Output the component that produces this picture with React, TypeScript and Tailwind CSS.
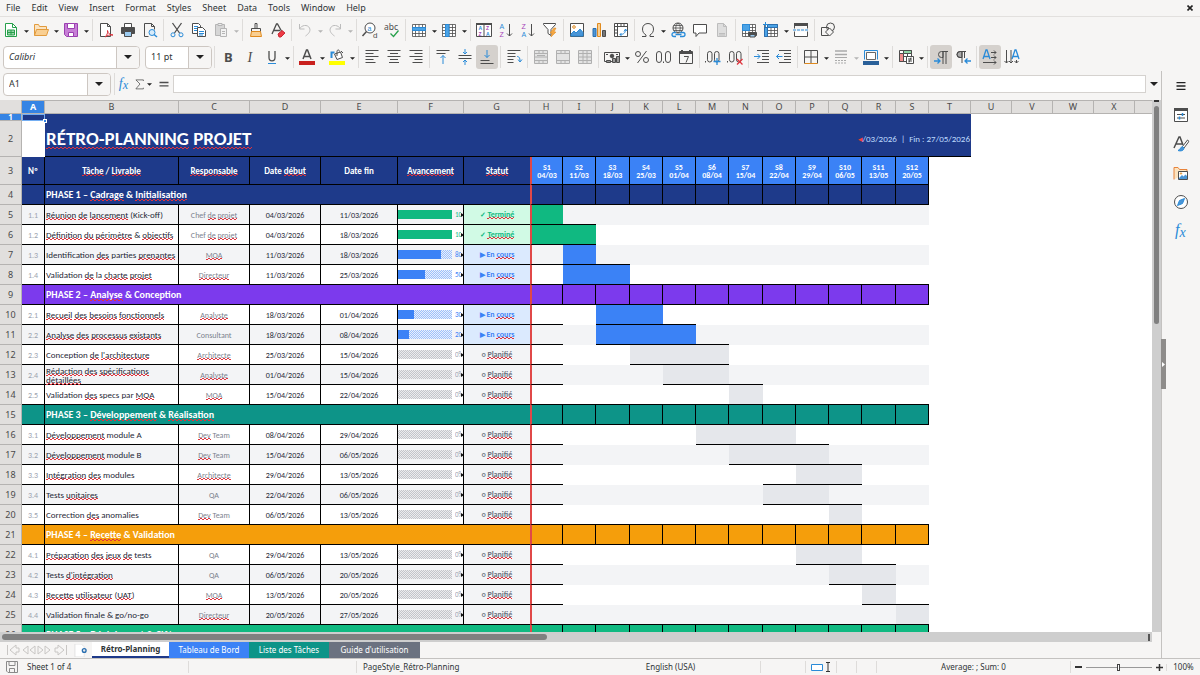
import { Fragment, type ReactNode } from "react";
import clsx from "clsx";

type Status = "done" | "active" | "planned";

type Task = {
  kind: "task";
  id: string;
  title: string;
  owner: string;
  start: string;
  end: string;
  progress: number;
  status: Status;
  // first week (0 = S1) and number of weeks in the gantt
  week: number;
  span: number;
};

type Phase = { kind: "phase"; title: string; color: string };

// Words between asterisks are unknown to the spell checker
const rows: (Task | Phase)[] = [
  { kind: "phase", title: "PHASE 1 – *Cadrage* & *Initialisation*", color: "bg-[#1e3a8a]" },
  { kind: "task", id: "1.1", title: "*Réunion* *de* *lancement* (Kick-off)", owner: "Chef *de* *projet*", start: "04/03/2026", end: "11/03/2026", progress: 100, status: "done", week: 0, span: 1 },
  { kind: "task", id: "1.2", title: "*Définition* *du* *périmètre* & *objectifs*", owner: "Chef *de* *projet*", start: "04/03/2026", end: "18/03/2026", progress: 100, status: "done", week: 0, span: 2 },
  { kind: "task", id: "1.3", title: "Identification *des* parties *prenantes*", owner: "*MOA*", start: "11/03/2026", end: "18/03/2026", progress: 80, status: "active", week: 1, span: 1 },
  { kind: "task", id: "1.4", title: "Validation *de* la *charte* *projet*", owner: "*Directeur*", start: "11/03/2026", end: "25/03/2026", progress: 50, status: "active", week: 1, span: 2 },
  { kind: "phase", title: "PHASE 2 – *Analyse* & Conception", color: "bg-[#7c3aed]" },
  { kind: "task", id: "2.1", title: "*Recueil* *des* *besoins* *fonctionnels*", owner: "*Analyste*", start: "18/03/2026", end: "01/04/2026", progress: 30, status: "active", week: 2, span: 2 },
  { kind: "task", id: "2.2", title: "*Analyse* *des* *processus* *existants*", owner: "Consultant", start: "18/03/2026", end: "08/04/2026", progress: 20, status: "active", week: 2, span: 3 },
  { kind: "task", id: "2.3", title: "Conception *de* *l'architecture*", owner: "*Architecte*", start: "25/03/2026", end: "15/04/2026", progress: 0, status: "planned", week: 3, span: 3 },
  { kind: "task", id: "2.4", title: "*Rédaction* *des* *spécifications* *détaillées*", owner: "*Analyste*", start: "01/04/2026", end: "15/04/2026", progress: 0, status: "planned", week: 4, span: 2 },
  { kind: "task", id: "2.5", title: "Validation *des* specs par *MOA*", owner: "*MOA*", start: "15/04/2026", end: "22/04/2026", progress: 0, status: "planned", week: 6, span: 1 },
  { kind: "phase", title: "PHASE 3 – *Développement* & *Réalisation*", color: "bg-[#0d9488]" },
  { kind: "task", id: "3.1", title: "*Développement* module A", owner: "*Dev* Team", start: "08/04/2026", end: "29/04/2026", progress: 0, status: "planned", week: 5, span: 3 },
  { kind: "task", id: "3.2", title: "*Développement* module B", owner: "*Dev* Team", start: "15/04/2026", end: "06/05/2026", progress: 0, status: "planned", week: 6, span: 3 },
  { kind: "task", id: "3.3", title: "*Intégration* *des* modules", owner: "*Architecte*", start: "29/04/2026", end: "13/05/2026", progress: 0, status: "planned", week: 8, span: 2 },
  { kind: "task", id: "3.4", title: "Tests *unitaires*", owner: "QA", start: "22/04/2026", end: "06/05/2026", progress: 0, status: "planned", week: 7, span: 2 },
  { kind: "task", id: "3.5", title: "Correction *des* anomalies", owner: "*Dev* Team", start: "06/05/2026", end: "13/05/2026", progress: 0, status: "planned", week: 9, span: 1 },
  { kind: "phase", title: "PHASE 4 – *Recette* & Validation", color: "bg-[#f59e0b]" },
  { kind: "task", id: "4.1", title: "*Préparation* *des* *jeux* *de* tests", owner: "QA", start: "29/04/2026", end: "13/05/2026", progress: 0, status: "planned", week: 8, span: 2 },
  { kind: "task", id: "4.2", title: "Tests *d'intégration*", owner: "QA", start: "06/05/2026", end: "20/05/2026", progress: 0, status: "planned", week: 9, span: 2 },
  { kind: "task", id: "4.3", title: "*Recette* *utilisateur* (*UAT*)", owner: "*MOA*", start: "13/05/2026", end: "20/05/2026", progress: 0, status: "planned", week: 10, span: 1 },
  { kind: "task", id: "4.4", title: "Validation finale & go/no-go", owner: "*Directeur*", start: "20/05/2026", end: "27/05/2026", progress: 0, status: "planned", week: 11, span: 1 },
  { kind: "phase", title: "PHASE 5 – *Déploiement* & *Clôture*", color: "bg-[#10b981]" },
];

const weeks = ["04/03", "11/03", "18/03", "25/03", "01/04", "08/04", "15/04", "22/04", "29/04", "06/05", "13/05", "20/05"];
const headings = ["Nº", "*Tâche* / *Livrable*", "*Responsable*", "Date *début*", "Date fin", "*Avancement*", "*Statut*"];
const letters = "ABCDEFGHIJKLMNOPQRSTUVWX".split("");
const columnWidths = [
  "w-[22px]", "w-[23px]", "w-[134px]", "w-[71px]", "w-[71px]", "w-[77px]", "w-[66px]", "w-[66px]",
  "w-[33px]", "w-[33px]", "w-[34px]", "w-[33px]", "w-[33px]", "w-[33px]", "w-[34px]", "w-[33px]", "w-[33px]", "w-[33px]", "w-[34px]", "w-[33px]",
  "w-[42px]", "w-[41px]", "w-[41px]", "w-[41px]", "w-[41px]",
];

const statusStyles: Record<Status, { label: string; mark: string; cell: string; fill: string; text: string; dots: string }> = {
  done: { label: "*Terminé*", mark: "✓", cell: "bg-[#d1fae5] text-[#10b981] font-bold", fill: "bg-[#10b981]", text: "text-[#10b981]", dots: "" },
  active: { label: "En *cours*", mark: "▶", cell: "bg-[#dbeafe] text-[#3b82f6] font-bold", fill: "bg-[#3b82f6]", text: "text-[#3b82f6]", dots: "bg-[conic-gradient(#9dc0fa_25%,#e8f0fd_0_50%,#9dc0fa_0_75%,#e8f0fd_0)]" },
  planned: { label: "*Planifié*", mark: "○", cell: "bg-[#f3f4f6] text-[#6b7280] font-bold", fill: "bg-[#e5e7eb]", text: "text-[#9ca3af]", dots: "bg-[conic-gradient(#c3c5ca_25%,#ececee_0_50%,#c3c5ca_0_75%,#ececee_0)]" },
};

function Checked({ text, large }: { text: string; large?: boolean }) {
  return (
    <>
      {text.split("*").map((part, i) =>
        i % 2 ? (
          <span
            key={i}
            className={clsx(
              "bg-[linear-gradient(90deg,#e0333c_50%,transparent_0),linear-gradient(90deg,transparent_50%,#e0333c_0)] bg-size-[4px_1px] bg-repeat-x",
              large ? "bg-position-[0_calc(100%-1px),0_calc(100%-2px)]" : "bg-position-[0_100%,0_calc(100%-1px)]",
            )}
          >
            {part}
          </span>
        ) : (
          <Fragment key={i}>{part}</Fragment>
        ),
      )}
    </>
  );
}

function RowHead({ n, height }: { n: number; height: string }) {
  return (
    <th scope="row" className={clsx("border-r border-b border-[#b5b3b1] p-0 text-center align-middle font-[Noto_Sans,sans-serif] text-[9px] leading-3", height, n === 1 ? "bg-[#3584e4] font-bold text-white" : "bg-[#e1dfdd] font-normal text-[#4a4a4a]")}>
      {n === 1 ? <span className="block h-[6px] text-[8px] leading-[6px]">1</span> : n}
    </th>
  );
}

function PhaseRow({ phase, n }: { phase: Phase; n: number }) {
  return (
    <tr>
      <RowHead n={n} height="h-[20px]" />
      <td className={clsx("border-r border-b border-black", phase.color)} />
      <td colSpan={6} className={clsx("border-b border-black px-px py-0 text-[10px] leading-3 font-bold whitespace-nowrap text-white", phase.color)}>
        <Checked text={phase.title} />
      </td>
      {weeks.map((w, i) => (
        <td key={w} className={clsx("border-r border-b border-black", phase.color, i === 0 && "border-l-2 border-l-[#e04848]")} />
      ))}
    </tr>
  );
}

function TaskRow({ task, n }: { task: Task; n: number }) {
  const stripe = n % 2 ? "bg-[#f3f4f6]" : "bg-white";
  const s = statusStyles[task.status];
  const next = rows[n - 3];
  const cell = "border-r border-b border-black p-0 text-center";
  const inBar = (t: Task | Phase, i: number) => t.kind === "task" && i >= t.week && i < t.week + t.span;

  return (
    <tr>
      <RowHead n={n} height="h-[20px]" />
      <td className={clsx(cell, stripe, "text-[8px] leading-[10px] text-[#9ca3af]")}>{task.id}</td>
      <td className={clsx("border-r border-b border-black px-px py-0 text-left text-[9px] leading-[9px] text-[#1f2937]", stripe)}>
        <Checked text={task.title} />
      </td>
      <td className={clsx(cell, stripe, "text-[8px] leading-[10px] text-[#7b828e]")}>
        <Checked text={task.owner} />
      </td>
      <td className={clsx(cell, stripe, "text-[8px] leading-[10px] text-[#1f2937]")}>{task.start}</td>
      <td className={clsx(cell, stripe, "text-[8px] leading-[10px] text-[#1f2937]")}>{task.end}</td>
      <td className={clsx(cell, stripe)}>
        <div className="flex items-center overflow-hidden">
          <div className={clsx("h-[9px] w-[54px] shrink-0 bg-size-[2px_2px]", s.dots)}>
            <div className={clsx("h-full", s.fill)} style={{ width: `${task.progress}%` }} />
          </div>
          <span className={clsx("ml-[3px] w-[6px] shrink-0 overflow-hidden text-left text-[7px] leading-[10px]", s.text)}>{task.progress}%</span>
          <svg viewBox="0 0 3 4" className="h-[4px] w-[3px] shrink-0">
            <path d="M0 0 3 2 0 4z" fill="#111" />
          </svg>
        </div>
      </td>
      <td className={clsx("border-b border-black p-0 text-center text-[8px] leading-[10px]", s.cell)}>
        <span className="text-[7px]">{s.mark}</span> <Checked text={s.label} />
      </td>
      {weeks.map((w, i) => {
        const lined = i === 0 || inBar(task, i) || inBar(next, i) || next.kind === "phase";
        return (
          <td
            key={w}
            className={clsx("p-0", inBar(task, i) ? s.fill : stripe, lined && "border-b border-b-black", i === 0 && "border-l-2 border-l-[#e04848]")}
          />
        );
      })}
    </tr>
  );
}

function Sheet() {
  return (
    <table className="w-full table-fixed border-separate border-spacing-0 bg-white font-[Carlito,Lato,sans-serif]">
      <colgroup>
        {columnWidths.map((w, i) => (
          <col key={i} className={w} />
        ))}
        <col />
      </colgroup>
      <thead>
        <tr className="font-[Noto_Sans,sans-serif]">
          <td className="h-[14px] border-r border-b border-[#b5b3b1] bg-[#e1dfdd]" />
          {letters.map((l) => (
            <th key={l} scope="col" className={clsx("border-t border-r border-b border-[#b5b3b1] p-0 text-center text-[9px] leading-[12px]", l === "A" ? "bg-[#3584e4] font-bold text-white" : "bg-[#e1dfdd] font-normal text-[#4a4a4a]")}>
              {l}
            </th>
          ))}
          <td className="border-t border-b border-[#b5b3b1] bg-[#e1dfdd]" />
        </tr>
      </thead>
      <tbody>
        <tr>
          <RowHead n={1} height="h-[7px]" />
          <td className="relative bg-[#1e3a8a] p-0 outline-1 -outline-offset-1 outline-[#74aef2]">
            <span className="absolute right-[-2px] bottom-[-2px] size-[4px] border border-white bg-[#3584e4]" />
          </td>
          <td colSpan={19} className="bg-[#1e3a8a] p-0" />
        </tr>
        <tr>
          <RowHead n={2} height="h-[36px]" />
          <td className="bg-white" />
          <td colSpan={15} className="border-b border-black bg-[#1e3a8a] p-0 pl-px text-[19px] leading-6 font-bold text-white">
            <Checked text="*RÉTRO-PLANNING* *PROJET*" large />
          </td>
          <td colSpan={4} className="border-b border-b-black bg-[#1e3a8a] p-0 pr-px text-right text-[9px] leading-3 whitespace-pre text-[#bfdbfe]">
            <span className="text-[#ef4444]">◂</span>/03/2026  |  Fin : 27/05/2026
          </td>
        </tr>
        <tr>
          <RowHead n={3} height="h-[28px]" />
          {headings.map((h, i) => (
            <th key={h} className={clsx("border-b border-black bg-[#1e3a8a] p-0 text-center text-[9px] leading-3 font-bold text-white", i < 6 && "border-r")}>
              <Checked text={h} />
            </th>
          ))}
          {weeks.map((w, i) => (
            <th key={w} className={clsx("border-r border-b border-black bg-[#3b82f6] p-0 text-center text-[8px] leading-[8px] font-bold text-white", i === 0 && "border-l-2 border-l-[#e04848]")}>
              S{i + 1}
              <br />
              {w}
            </th>
          ))}
        </tr>
        {rows.map((r, i) => (r.kind === "phase" ? <PhaseRow key={r.title} phase={r} n={i + 4} /> : <TaskRow key={r.id} task={r} n={i + 4} />))}
      </tbody>
    </table>
  );
}

/* ---------- toolbar icons, 16x16 grid ---------- */

const ink = "#4d4d4d";
const blue = "#2a8bd8";

function Glyph({ children, size = "size-4" }: { children: ReactNode; size?: string }) {
  return (
    <svg viewBox="0 0 16 16" className={clsx("shrink-0 overflow-visible", size)} fill="none" stroke={ink} strokeWidth="1">
      {children}
    </svg>
  );
}

const grid = "M1.5 2.5h13v12h-13zM1.5 5.5h13M1.5 8.5h13M1.5 11.5h13M4.5 2.5v12M8 2.5v12M11.5 2.5v12";

const icons: Record<string, ReactNode> = {
  new: (<><path d="M2.5 1.5h7l4 4v9h-11z" fill="#fff" stroke="#27a04b" /><path d="M9.5 1.5v4h4" stroke="#27a04b" /><path d="M4.5 8h7v5h-7z" fill="#9bd6ab" stroke="#27a04b" /><path d="M4.5 10.5h7M8 8v5" stroke="#27a04b" /></>),
  open: (<><path d="M1.5 13.5v-11h4l1 2h7v3" fill="#fbe3c0" stroke="#e29b3d" /><path d="m1.5 13.5 2-6h12l-2 6z" fill="#f9cf92" stroke="#e29b3d" /></>),
  save: (<><path d="M1.5 1.5h13v13h-11l-2-2z" fill="#c77fd6" stroke="#9b3fb0" /><path d="M4.5 1.5h7v5h-7z" fill="#fff" stroke="#9b3fb0" /><path d="M5.5 10.5h5v4h-5z" fill="#fff" stroke="#9b3fb0" /></>),
  pdf: (<><path d="M2.5 1.5h7l3 3v10h-10z" fill="#fff" /><path d="M9.5 1.5v3h3" /><path d="M7 15c2-2 3-4 2.5-6.500C10 11.5 12 13 15 13c-3-.5-6 .5-8 2z" stroke="#d9303a" /></>),
  print: (<><path d="M4.5 5V1.5h7V5" fill="#fff" /><path d="M1.5 5.5h13v6h-13z" fill={ink} /><path d="M4.5 9.5h7v5h-7z" fill="#9ccbf0" stroke={ink} /></>),
  preview: (<><path d="M2.5 14.5v-13h7l3 3v3M2.5 14.5h4" /><path d="M9.5 1.5v3h3" /><circle cx="10" cy="10.5" r="3" fill="#d7ebfa" stroke={blue} /><path d="m12 12.5 3 2.5" stroke={blue} strokeWidth="1.5" /></>),
  cut: (<><path d="m3.5 1 7 10M12.5 1l-7 10" strokeWidth="1.3" /><circle cx="4" cy="12.8" r="2" stroke={blue} /><circle cx="12" cy="12.8" r="2" stroke={blue} /></>),
  copy: (<><path d="M1.5 1.5h6l2 2v8h-8z" fill="#fff" /><path d="M3 4.5h4M3 6.5h3M3 8.5h3" stroke={blue} /><path d="M6.5 5.5h5l3 3v6h-8z" fill="#fff" /><path d="M8 9.5h5M8 11.5h5M8 13h4" stroke={blue} /></>),
  paste: (<g stroke="#b5b5b5"><path d="M2.5 2.5h9v11h-9z" fill="#d6d6d6" /><path d="M5 1.5h4v2H5z" fill="#eee" /><path d="M7.5 6.5h6v8h-6z" fill="#f2f2f2" /><path d="M9 9.5h3M9 11.5h3" /></g>),
  clone: (<><path d="M7 1.5h2v5H7z" /><path d="M3.5 6.5h9v3h-9z" /><path d="M3.5 9.5h9l1 5h-11z" fill="#f9cf92" stroke="#e08a1e" /></>),
  clear: (<><path d="m2 12 4.5-10h1L12 10M4 8.5h6" strokeWidth="1.3" /><path d="m8 12 4-3.5 3 2.5-4 4H9z" fill="#ee3b45" stroke="#c92a36" /></>),
  undo: (<path d="M2.5 2v5h5M2.5 7c2-4 8-5 10-1 1.5 3-1 6-4 8" stroke="#bcbcbc" />),
  redo: (<path d="M13.5 2v5h-5M13.5 7c-2-4-8-5-10-1-1.5 3 1 6 4 8" stroke="#bcbcbc" />),
  find: (<><circle cx="8" cy="6" r="5" fill="#fff" /><path d="M4.500 9.5.5 14" strokeWidth="1.5" /><text x="5.5" y="8.5" fontSize="7" fill={blue} stroke="none" fontFamily="Liberation Sans">a</text><text x="11" y="16" fontSize="8" fill={ink} stroke="none" fontFamily="Liberation Sans">d</text></>),
  spell: (<><text x="0" y="8" fontSize="8.5" fill={ink} stroke="none" fontFamily="Noto Sans">abc</text><path d="m6.5 11.5 3 3 5-6" stroke="#27a04b" strokeWidth="1.3" /></>),
  row: (<><path d={grid} fill="#fff" strokeWidth=".8" /><path d="M1.500 5.5h13v3h-13z" fill="#4ba3e6" stroke={blue} /></>),
  column: (<><path d={grid} fill="#fff" strokeWidth=".8" /><path d="M4.500 2.500H8v12H4.5z" fill="#4ba3e6" stroke={blue} /></>),
  sort: (<><path d="M.5 1.5h15v13H.5zM8 3v12" fill="#fff" /><path d="M0 2h16" strokeWidth="2" /><g stroke="none" fontFamily="Liberation Sans" fontWeight="700" fontSize="5"><text x="2.500" y="8" fill={blue}>A</text><text x="2.500" y="14" fill="#a53fb8">Z</text><text x="10" y="8" fill="#a53fb8">Z</text><text x="10" y="14" fill={blue}>A</text></g></>),
  asc: (<><g stroke="none" fontFamily="Liberation Sans" fontSize="7"><text x="1.5" y="6.500" fill={blue}>A</text><text x="1.5" y="15" fill="#a53fb8">Z</text></g><path d="M11.5 2v12m-2.5-2.5 2.5 2.5 2.5-2.5" /></>),
  desc: (<><g stroke="none" fontFamily="Liberation Sans" fontSize="7"><text x="1.5" y="6.500" fill="#a53fb8">Z</text><text x="1.5" y="15" fill={blue}>A</text></g><path d="M11.5 2v12m-2.5-2.5 2.5 2.5 2.5-2.5" /></>),
  filter: (<><path d="M1.5 1.5h12v1l-4.5 5v6l-3-2v-4l-4.5-5z" fill="#fff" /><path d="m12 6-4 5h2l-1 4 5-5h-2l2-4z" fill="#f5a742" stroke="#e08a1e" strokeWidth=".5" /></>),
  image: (<><path d="M1.5 1.5h13v13h-13z" fill="#fff" /><circle cx="5" cy="5" r="1.3" stroke="#e08a1e" /><path d="m2 12 3-3 2 2 4-4 3 3.5V14H2z" fill="#4b95d6" stroke={blue} /></>),
  chart: (<><path d="M2 6.5h3v8H2z" fill="#4b95d6" stroke="#2a6fb0" /><path d="M6.5 1.5h3v13h-3z" fill="#f9cf92" stroke="#e08a1e" /><path d="M11.5 8.5h3v6h-3z" fill="#777" /></>),
  pivot: (<><path d="M1.5 1.5h13v13h-13zM1.5 4.5h13M4.5 1.5v13M8 1.5v3M11 1.5v3M1.5 8h3M1.5 11h3" fill="#fff" /><path d="M7 12.5c4 0 5.5-2 5.5-5m-1.5 2 1.5-2.5L14 9M8.5 11 7 12.5 8.5 14" stroke={blue} /></>),
  omega: (<path d="M2 14.5h4v-1.5C3.5 11.5 2.5 9.5 2.5 7c0-3.5 2.5-5.5 5.5-5.5s5.5 2 5.5 5.5c0 2.5-1 4.5-3.5 6v1.5h4" />),
  link: (<><circle cx="8" cy="6" r="5" /><path d="M3 6h10M4 3.5h8M4 8.5h8M8 1c-3 3-3 7 0 10M8 1c3 3 3 7 0 10" strokeWidth=".8" /><path d="M6 10.5H4a2 2 0 0 0 0 4h2M10 10.5h3a2 2 0 0 1 0 4h-3M5.5 12.5h6" stroke={blue} strokeWidth="1.3" /></>),
  comment: (<path d="M1.5 2.5h13v8.5H7L4 14.5V11H1.5z" fill="#fff" />),
  footer: (<g stroke="#bdbdbd"><path d="M3.5 1.5h6l3 3v10h-9z" fill="#dedede" /><path d="M9.5 1.5v3h3M5 11.5h6M5 13h6" /></g>),
  printArea: (<><path d={grid} fill="#fff" strokeWidth=".8" /><path d="M1.5 2.5h7v6h-7z" fill="#4ba3e6" stroke={blue} /><path d="M7.5 10.5h8v3h-8z" fill={ink} /><path d="M9 12.5h5V15H9z" fill="#9ccbf0" /></>),
  freeze: (<><path d={grid} fill="#fff" strokeWidth=".8" /><path d="M4.5 2.5h10v3h-10zM1.5 5.5h3v9h-3z" fill="#4ba3e6" stroke="#2a6fb0" /><path d="M2.5 0v5M0 2.5h5" stroke={blue} /></>),
  split: (<><path d="M1.5 1.5h13v5M1.5 1.5v5M1.5 9.5v5h13v-5" fill="#fff" /><path d="M1 2.5h14" strokeWidth="3" /><path d="M0 8h16" stroke={blue} strokeDasharray="3 1" /></>),
  shapes: (<><circle cx="10.5" cy="5" r="4" /><path d="M1.5 5.5h7v8h-7z" /><path d="m9.5 6 4 4-4 4-4-4z" fill="#f6f5f4" /></>),
  bold: (<text x="4" y="13" fontSize="13" fontWeight="700" fill={ink} stroke="none" fontFamily="Noto Sans">B</text>),
  italic: (<text x="5.500" y="13" fontSize="14" fontStyle="italic" fill={ink} stroke="none" fontFamily="Liberation Serif">I</text>),
  underline: (<><path d="M5 2v6.500c0 4.500 6 4.500 6 0V2" strokeWidth="1.3" /><path d="M4 14.5h8" stroke={blue} /></>),
  fontColor: (<><path d="m4 10 3.5-9h1L12 10M5 7.5h6" strokeWidth="1.5" /><path d="M0 12h16v4H0z" fill="#c9211e" stroke="none" /></>),
  fill: (<><path d="m5.500 5 6-2 2 5.500-5.500 2z" fill="#fff" /><path d="M2.500 9V3.500h3" stroke={blue} strokeWidth="2" /><path d="M8 7V2.500c0-2 2.500-2 2.500 0M12 2l2 2" /><path d="M0 12h16v4H0z" fill="#ff0" stroke="none" /></>),
  left: (<path d="M1.5 1.5h13M1.5 4.5h8M1.5 7.5h13M1.5 10.5h8M1.5 13.5h10" />),
  center: (<path d="M1.5 1.5h13M4 4.5h8M1.5 7.5h13M4 10.5h8M3 13.5h10" />),
  right: (<path d="M1.5 1.5h13M6.5 4.5h8M1.5 7.5h13M6.5 10.5h8M4.5 13.5h10" />),
  top: (<><path d="M1.5 1.5h13M1.5 4.5h9" /><path d="M8 15V6.5M5.5 9 8 6.5 10.5 9" stroke={blue} /></>),
  middle: (<><path d="M1.5 6.5h13M1.5 9.5h13" /><path d="M8 0v5M6 3l2 2 2-2M8 16v-5M6 13l2-2 2 2" stroke={blue} /></>),
  bottom: (<><path d="M1.5 11.5h9M1.5 14.5h13" /><path d="M8 1v7.5M5.5 6 8 8.5 10.5 6" stroke={blue} /></>),
  wrap: (<><path d="M1.5 1.5h13M1.5 4.5h8M1.5 7.5h8M1.5 10.5h6M1.5 13.5h6" /><path d="M11 7.5c2 0 3 1 3 5m-2-2 2 2.5 2-2.5" stroke={blue} /></>),
  merge: (<path d="M1.5 1.5h13v13h-13zM1.5 4.5h13M1.5 11.5h13M1.5 8h13M6 1.5v3M10 11.5v3M6 11.5v3M10 1.5v3M4 6.5h8" fill="#e3e3e3" stroke="#b0b0b0" />),
  mergeCells: (<path d="M1.5 1.5h13v13h-13zM1.5 4.5h13M1.5 11.5h13M6 1.5v3M10 11.5v3M6 11.5v3M10 1.5v3" fill="#e3e3e3" stroke="#b0b0b0" />),
  unmerge: (<path d="M1.5 1.5h13v13h-13zM1.5 4.5h13M1.5 11.5h13M1.5 8h13M6 1.5v13M10 1.5v13" fill="#e3e3e3" stroke="#b0b0b0" />),
  currency: (<><path d="M.5 3.5h15v9H.5z" /><path d="M2 5.500h2M12 5.500h2" /><circle cx="8" cy="7" r="1.800" fill={ink} /><path d="M8.500 9.500h3v4h-3zM12.500 7.500h3v6h-3zM2.500 11.500h4v2h-4z" fill="#999" /></>),
  percent: (<><circle cx="4" cy="5" r="2.5" /><circle cx="12" cy="11" r="2.5" /><path d="m12.5 2-9 12" /></>),
  number: (<><rect x=".5" y="2.5" width="5" height="11" rx="2.5" /><rect x="9.5" y="2.5" width="5" height="11" rx="2.5" /><path d="M7.5 12.5v1.5" /></>),
  date: (<><path d="M1.5 2.5h13v12h-13z" /><path d="M1 4h14M4 1v3M12 1v3" strokeWidth="2" /><path d="M6 7.5h4.5l-2.5 6" /></>),
  addDecimal: (<><path d="M.5 12v1.5" /><rect x="2.5" y="2.5" width="4.5" height="10.5" rx="2.2" /><rect x="9.5" y="2.5" width="4.5" height="10.5" rx="2.2" /><path d="M12 9v7M8.5 12.5h7" stroke={blue} strokeWidth="1.3" /></>),
  delDecimal: (<><path d="M.5 12v1.5" /><rect x="2.5" y="2.5" width="4.5" height="10.5" rx="2.2" /><rect x="9.5" y="2.5" width="4.5" height="10.5" rx="2.2" /><path d="m10 10 5.5 5.5m0-5.5L10 15.5" stroke="#e0333c" strokeWidth="1.3" /></>),
  indent: (<><path d="M3 1.5h12M8 4.5h7M8 7.5h7M8 10.5h7M3 13.5h12" /><path d="M0 7.5h6M3.5 5 6 7.5 3.5 10" stroke={blue} /></>),
  outdent: (<><path d="M3 1.5h12M8 4.5h7M8 7.5h7M8 10.5h7M3 13.5h12" /><path d="M.5 7.5h6M3 5 .5 7.5 3 10" stroke={blue} /></>),
  borders: (<><path d="M1.5 14.5v-13h13v13M8 1.5v13M1.5 8h13" /><path d="M1.5 14.5h13" stroke="#e08a1e" /></>),
  borderStyle: (<><path d="M2 2h12M2 5.500h12" stroke="#aaa" strokeWidth="1.5" /><path d="M2 8.500h12" stroke="#aaa" /><path d="M2 11.500h12M2 14h12" stroke="#aaa" strokeDasharray="2 1" /></>),
  borderColor: (<><path d="M3.500 3.500h9v7h-9z" stroke="#666" fill="#fff" /><path d="M1.5 10.5v-9h13v9" stroke={blue} /><path d="M0 12h16v4H0z" fill="#2a6099" stroke="none" /></>),
  conditional: (<><path d="M1.5 1.5h12v11h-12zM1.5 4.5h12M1.5 7.5h12M5.5 1.5v11M9.5 1.5v11" fill="#fff" /><path d="M5.5 1.5h8v3h-8z" fill="#8fd6a5" /><path d="M1.5 4.5h4v8h-4z" fill="#f08a8a" /><path d="M8.5 7.5h7v7h-7z" fill="#fff" /><path d="M10 10h4M10 12h4M13 8.5l-2 5" /></>),
  ltr: (<><path d="M15 2.5H8.5a3 3 0 0 0 0 6H10V2.5M10 2v13M13 2v13" /><path d="M1 12h6M4.5 9.5 7 12l-2.5 2.5" stroke={blue} strokeWidth="1.3" /></>),
  rtl: (<><path d="M7 2.500H5a3 3 0 0 0 0 6h2z" fill="#aaa" /><path d="M11 2.5H5a3 3 0 0 0 0 6h2M7 2v12M9.500 2v7" /><path d="M16 12h-6m2.5-2.5L10 12l2.5 2.5" stroke={blue} strokeWidth="1.3" /></>),
  horizontalText: (<><path d="m1 10 3-9h1l3 9M2 7.5h5" stroke={blue} strokeWidth="1.3" /><path d="M9 3.5h5M9 8.5h5M1 13.5h13M12 1.5l2 2-2 2M12 6.5l2 2-2 2M12 11.5l2 2-2 2" /></>),
  verticalText: (<><path d="m8 10 3-9h1l3 9M9 7.5h5" stroke={blue} strokeWidth="1.3" /><path d="M2.5 1v13M7 1v13M12.5 11v3M.5 12l2 2 2-2M5 12l2 2 2-2M10.5 12l2 2 2-2" /></>),
  sum: (<path d="M12.5 4V2.5h-10L8 8l-5.5 6.5h10V13" />),
  equals: (<path d="M2 6h12M2 10.5h12" strokeWidth="1.8" />),
  menu: (<path d="M2 3.5h12M2 8h12M2 12.5h12" stroke="#222" strokeWidth="1.8" />),
  properties: (<><path d="M1.5 1.5h13v13h-13z" fill="#fff" /><path d="M1 2.5h14" strokeWidth="3" /><path d="M4 7.5h8M4 11h8" /><path d="M9.5 6v3M6.5 9.5v3" stroke={blue} strokeWidth="1.5" /></>),
  styles: (<><path d="M1 12 6 1h1l3 8M3 8h6" strokeWidth="1.5" /><path d="m14.5 4-5 6.5 1.5 1.5 4.5-6c.5-1-.3-2-1-2z" fill="#fff" /><path d="M9.5 10.5c-2 .5-2 3-4.5 4 3 1 6 0 6-2.5z" fill="#4b95d6" stroke={blue} /></>),
  gallery: (<><path d="M1 14.5v-12h4l1.5 2H14v3" fill="#fbe3c0" stroke="#e8833a" /><path d="M5.5 6.5h9v8h-9z" fill="#fff" /><path d="m6 13 3-3 1.5 1.5 2-2L14 11v3H6z" fill="#4b95d6" stroke="none" /><circle cx="8" cy="8.5" r=".7" stroke="#e08a1e" /></>),
  navigator: (<><circle cx="8" cy="8" r="6.5" fill="#fff" /><path d="m11.5 4.5-2 5-5 2 2-5z" fill="#4b95d6" stroke={blue} /></>),
  fx: (<text x="2" y="12" fontSize="16" fill={blue} stroke="none" fontFamily="Liberation Serif" fontStyle="italic">f<tspan dy="2" fontSize="14">x</tspan></text>),
};

// "|" is a separator, a trailing "v" after a space adds the drop-down arrow, "-" means disabled, "!" pressed
const standardBar = ["new v", "open v", "save v", "|", "pdf", "print", "preview", "|", "cut", "copy", "paste -v", "|", "clone", "clear", "|", "undo -v", "redo -v", "|", "find", "spell", "|", "row v", "column v", "|", "sort", "asc", "desc", "filter", "|", "image", "chart", "pivot", "|", "omega v", "link", "comment", "footer", "|", "printArea", "freeze v", "split", "|", "shapes"];
const formatBar = ["|", "bold", "italic", "underline v", "|", "fontColor v", "fill v", "|", "left", "center", "right", "|", "top", "middle", "bottom !", "|", "wrap", "|", "merge", "mergeCells", "unmerge", "|", "currency v", "percent", "number", "date", "|", "addDecimal", "delDecimal", "|", "indent", "outdent", "|", "borders v", "borderStyle -v", "borderColor v", "|", "conditional v", "|", "ltr !", "rtl", "|", "horizontalText !", "verticalText"];

function Caret({ muted, large }: { muted?: boolean; large?: boolean }) {
  return (
    <svg viewBox="0 0 8 4" className={clsx("shrink-0", large ? "h-[4px] w-[8px]" : "h-[3px] w-[5px]")}>
      <path d="M0 0h8L4 4z" fill={muted ? "#b5b5b5" : "#222"} />
    </svg>
  );
}

function Tools({ items }: { items: string[] }) {
  return (
    <>
      {items.map((item, i) => {
        if (item === "|") return <span key={i} className="mx-[2px] h-[22px] w-px shrink-0 bg-[#dedcda]" />;
        const [name, flags = ""] = item.split(" ");
        return (
          <Fragment key={i}>
            <button aria-label={name} className={clsx("flex h-6 w-[22px] shrink-0 items-center justify-center rounded-[3px]", flags.includes("!") && "bg-[#d5d1cd]")}>
              <Glyph>{icons[name]}</Glyph>
            </button>
            {flags.includes("v") && (
              <button aria-label={`${name} options`} className="flex h-6 w-2 shrink-0 items-center justify-center pt-[2px]">
                <Caret muted={flags.includes("-")} />
              </button>
            )}
          </Fragment>
        );
      })}
    </>
  );
}

function Combo({ label, value, width, button, italic }: { label: string; value: string; width: string; button: string; italic?: boolean }) {
  return (
    <div className={clsx("flex h-[23px] shrink-0 overflow-hidden rounded-[4px] border border-[#cdc7c2] bg-white", width)}>
      <input aria-label={label} defaultValue={value} className={clsx("min-w-0 flex-1 px-[5px] text-[9px] text-[#2e3436] outline-none", italic && "italic")} />
      <button aria-label={`${label} list`} className={clsx("flex items-center justify-center border-l border-[#cdc7c2] bg-[#f6f5f4]", button)}>
        <Caret large />
      </button>
    </div>
  );
}

const menus = ["File", "Edit", "View", "Insert", "Format", "Styles", "Sheet", "Data", "Tools", "Window", "Help"];
const tabs = [
  { name: "Rétro-Planning", style: "w-[77px] border-b-2 border-[#1e3a8a] bg-white font-bold text-[#2e3436]" },
  { name: "Tableau de Bord", style: "w-[80px] bg-[#3b82f6] text-white" },
  { name: "Liste des Tâches", style: "w-[80px] bg-[#0d9488] text-white" },
  { name: "Guide d'utilisation", style: "w-[91px] bg-[#6b7280] text-white" },
];

export default function App() {
  return (
    <div className="flex h-screen flex-col overflow-hidden bg-[#f6f5f4] font-[Noto_Sans,sans-serif] text-[9px] leading-3 text-[#2e3436]">
      <nav className="flex h-[17px] shrink-0 items-center gap-[11px] border-b border-[#e2e0de] pr-[7px] pl-[6px]">
        {menus.map((m) => (
          <button key={m}>{m}</button>
        ))}
        <button aria-label="Close" className="ml-auto">
          <svg viewBox="0 0 6 6" className="size-[6px]" stroke="#222" strokeWidth="1.6">
            <path d="m.5.5 5 5m0-5-5 5" />
          </svg>
        </button>
      </nav>

      <div className="flex h-[26px] shrink-0 items-center">
        <Tools items={standardBar} />
      </div>

      <div className="flex h-[28px] shrink-0 items-center pl-[3px]">
        <Combo label="Font" value="Calibri" width="w-[137px]" button="w-[23px]" italic />
        <span className="w-[5px]" />
        <Combo label="Size" value="11 pt" width="w-[67px]" button="w-[23px]" />
        <Tools items={formatBar} />
      </div>

      <div className="flex min-h-0 flex-1">
        <main className="flex min-w-0 flex-1 flex-col">
          <div className="flex h-[29px] shrink-0 items-center pb-[3px] pl-[3px]">
            <Combo label="Name Box" value="A1" width="w-[108px]" button="w-[23px]" />
            <span className="ml-[3px] h-[22px] w-px bg-[#dedcda]" />
            <button aria-label="Function Wizard" className="flex w-[18px] justify-center">
              <Glyph size="size-[14px]">{icons.fx}</Glyph>
            </button>
            <button aria-label="Select Function" className="flex w-[14px] justify-center">
              <Glyph size="size-3">{icons.sum}</Glyph>
            </button>
            <Caret />
            <button aria-label="Formula" className="ml-[3px] flex w-[18px] justify-center">
              <Glyph size="size-[12px]">{icons.equals}</Glyph>
            </button>
            <input aria-label="Formula input" className="h-[18px] min-w-0 flex-1 border border-[#d5d2cf] bg-white px-1 outline-none" />
            <button aria-label="Expand formula bar" className="flex w-[15px] items-center justify-center">
              <Caret large />
            </button>
          </div>

          <div className="flex min-h-0 flex-1">
            <div className="min-w-0 flex-1 overflow-hidden">
              <Sheet />
            </div>
            <div className="w-[9px] shrink-0 bg-[#cecece] px-[2px]">
              <div className="h-[2px] bg-[#333]" />
              <div className="mt-[4px] h-[41%] rounded-full bg-[#808080]" />
            </div>
          </div>

          <div className="mr-[9px] flex h-[10px] shrink-0 items-center justify-between bg-[#cecece] px-[2px]">
            <div className="h-[6px] w-[47.5%] rounded-full bg-[#808080]" />
            <div className="h-[7px] w-[2px] bg-[#555]" />
          </div>

          <div className="flex h-[16px] shrink-0 items-stretch text-[8px]">
            <div className="flex w-[92px] items-center pl-[6px]">
              <svg viewBox="0 0 62 12" className="h-[12px] w-[62px]" fill="none" stroke="#c8c6c4">
                <path d="M1.5 1v10M10 1 4 6l6 5V8h3V4h-3zM22 2l-5 4 5 4zM29 2l-5 4 5 4zM32 2l5 4-5 4zM39 2l5 4-5 4zM52 1l6 5-6 5V8h-3V4h3zM60.5 1v10" />
              </svg>
              <button aria-label="Add sheet" className="ml-[6px]">
                <svg viewBox="0 0 14 14" className="size-[13px]" fill="none">
                  <path d="M1 0h7l3 3v11H1z" fill="#fff" stroke="#e2e2e2" />
                  <circle cx="11" cy="7" r="2" stroke="#2a6fb0" strokeWidth="1.5" />
                </svg>
              </button>
            </div>
            {tabs.map((t) => (
              <button key={t.name} className={clsx("flex shrink-0 items-center justify-center whitespace-nowrap", t.style)}>
                {t.name}
              </button>
            ))}
          </div>
        </main>

        <aside className="relative flex w-[39px] shrink-0 flex-col items-center gap-[13px] border-l border-[#c4c2c0] pt-[7px]">
          {["menu", "properties", "styles", "gallery", "navigator", "fx"].map((name) => (
            <button key={name} aria-label={name}>
              <Glyph size={name === "menu" ? "my-[2px] size-3" : "size-4"}>{icons[name]}</Glyph>
            </button>
          ))}
          <button aria-label="Hide sidebar" className="absolute top-[268px] -left-px flex h-[50px] w-[5px] items-center justify-center bg-[#8e8c8a]">
            <svg viewBox="0 0 3 5" className="h-[5px] w-[3px]">
              <path d="M0 0 3 2.5 0 5z" fill="#fff" />
            </svg>
          </button>
        </aside>
      </div>

      <footer className="grid h-[17px] shrink-0 grid-cols-[189fr_168fr_224fr_180fr_45fr_31fr_20fr_20fr_194fr_96fr_33fr] items-center border-t border-[#c4c2c0] text-[8px] whitespace-nowrap *:border-[#dedcda]">
        <div className="flex items-center gap-[9px] border-r pl-[6px]">
          <svg viewBox="0 0 12 12" className="size-3" fill="none" stroke="#8a8a8a">
            <path d="M.5.5h11v11H2l-1.5-1.5zM3 .5v4h6v-4M3.5 11.5v-4h5v4" />
          </svg>
          Sheet 1 of 4
        </div>
        <div className="h-3 border-r" />
        <div className="pl-[6px]">PageStyle_Rétro-Planning</div>
        <div className="border-r text-center">English (USA)</div>
        <div className="h-3 border-r" />
        <div className="flex items-center justify-center gap-[2px] border-r">
          <svg viewBox="0 0 20 12" className="h-3 w-5" fill="none">
            <path d="M.5 3.5h11v6H.5z" fill="#fff" stroke={blue} />
            <path d="M15 1.5h4M17 1.5v9M15 10.5h4" stroke="#333" />
          </svg>
        </div>
        <div className="h-3 border-r" />
        <div className="h-3 border-r" />
        <div className="border-r text-center">Average: ; Sum: 0</div>
        <div className="flex items-center justify-center gap-[4px] border-r">
          <button aria-label="Zoom out" className="h-[2px] w-[7px] bg-[#333]" />
          <input
            type="range"
            aria-label="Zoom"
            defaultValue={50}
            className="h-px w-[66px] appearance-none bg-[#999] [&::-webkit-slider-thumb]:h-[7px] [&::-webkit-slider-thumb]:w-[3px] [&::-webkit-slider-thumb]:appearance-none [&::-webkit-slider-thumb]:border [&::-webkit-slider-thumb]:border-[#444] [&::-webkit-slider-thumb]:bg-white"
          />
          <button aria-label="Zoom in">
            <svg viewBox="0 0 7 7" className="size-[7px]" stroke="#333" strokeWidth="1.5">
              <path d="M0 3.5h7M3.5 0v7" />
            </svg>
          </button>
        </div>
        <div className="text-center">100%</div>
      </footer>
    </div>
  );
}
